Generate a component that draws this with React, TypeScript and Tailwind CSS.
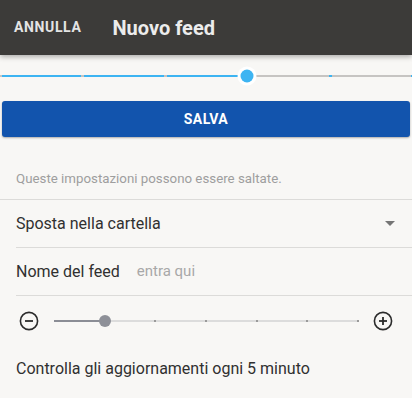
import React from 'react';

function MinusCircle() {
  return (
    <svg width="20" height="20" viewBox="0 0 20 20" fill="none" stroke="#2b2b2b" strokeWidth="1.6">
      <circle cx="10" cy="10" r="8.6" />
      <line x1="6" y1="10" x2="14" y2="10" strokeWidth="1.8" />
    </svg>
  );
}

function PlusCircle() {
  return (
    <svg width="20" height="20" viewBox="0 0 20 20" fill="none" stroke="#2b2b2b" strokeWidth="1.6">
      <circle cx="10" cy="10" r="8.6" />
      <line x1="6" y1="10" x2="14" y2="10" strokeWidth="1.8" />
      <line x1="10" y1="6" x2="10" y2="14" strokeWidth="1.8" />
    </svg>
  );
}

function StepBar() {
  // 5 segments, value at 3/5
  const ticks = [0, 1, 2, 3, 4, 5];
  return (
    <div className="relative h-[44px]">
      <div className="absolute left-0 right-0 top-[20px] h-[2px] bg-[#c6c4c2]" />
      <div className="absolute left-0 top-[20px] h-[2px] w-[60%] bg-[#3db4f2]" />
      {ticks.map((t) => (
        <div
          key={t}
          className={`absolute top-[20px] h-[2px] w-[3px] ${t <= 3 ? 'bg-[#c6c4c2]' : 'bg-[#3db4f2]'}`}
          style={{ left: `calc(${t * 20}% - 1px)` }}
        />
      ))}
      <div className="absolute left-[60%] top-[21px] h-[19px] w-[19px] -translate-x-1/2 -translate-y-1/2 rounded-full bg-white">
        <div className="m-[3px] h-[13px] w-[13px] rounded-full bg-[#3db4f2]" />
      </div>
    </div>
  );
}

function IntervalSlider() {
  const dots = [2, 3, 4, 5, 6];
  return (
    <div className="flex h-[50px] items-center pl-[19px] pr-[19px]">
      <MinusCircle />
      <div className="relative mx-[15px] h-[2px] flex-1 bg-[#dcdcdc]">
        <div className="absolute left-0 top-0 h-[2px] w-[16.67%] bg-[#8b8d95]" />
        {dots.map((d) => (
          <div
            key={d}
            className="absolute top-0 h-[2px] w-[2px] bg-[#9a9a9a]"
            style={{ left: `calc(${(d / 6) * 100}% - 1px)` }}
          />
        ))}
        <div className="absolute left-[16.67%] top-[1px] h-[12px] w-[12px] -translate-x-1/2 -translate-y-1/2 rounded-full bg-[#8e9098]" />
      </div>
      <PlusCircle />
    </div>
  );
}

export default function App() {
  return (
    <div className="h-[398px] w-[412px] overflow-hidden bg-[#f8f7f5] font-['Roboto',sans-serif] text-[#303030]">
      <header className="relative z-10 flex h-[55px] items-center bg-[#3c3b39] shadow-[0_2px_5px_rgba(0,0,0,0.3)]">
        <button className="pl-[14px] text-[14px] font-bold tracking-[0.045em] text-[#e4e4e4]">ANNULLA</button>
        <h1 className="ml-[31px] text-[20px] font-bold text-[#ececec]">Nuovo feed</h1>
      </header>

      <StepBar />

      <div className="px-[2px] pt-[2px]">
        <button className="flex h-[36px] w-full items-center justify-center rounded-[3px] bg-[#1254ad] text-[14px] font-bold tracking-[0.03em] text-white shadow-[0_1px_2px_rgba(0,0,0,0.3)]">
          SALVA
        </button>
      </div>

      <p className="px-4 pb-[10px] pt-[32px] text-[13.3px] leading-[20px] text-[#9e9e9e]">
        Queste impostazioni possono essere saltate.
      </p>
      <div className="h-px bg-[#dcdbd9]" />

      <div className="ml-4 flex h-[48px] items-center justify-between border-b border-[#dcdbd9] pr-[17px]">
        <span className="text-[16px]">Sposta nella cartella</span>
        <span className="h-0 w-0 border-x-[5px] border-t-[5px] border-x-transparent border-t-[#757575]" />
      </div>

      <div className="ml-4 flex h-[48px] items-center border-b border-[#dcdbd9]">
        <span className="text-[16px]">Nome del feed</span>
        <span className="ml-[17px] text-[15px] text-[#a8a8a8]">entra qui</span>
      </div>

      <IntervalSlider />

      <p className="px-4 pt-[13px] text-[16px] leading-[20px]">Controlla gli aggiornamenti ogni 5 minuto</p>
    </div>
  );
}
